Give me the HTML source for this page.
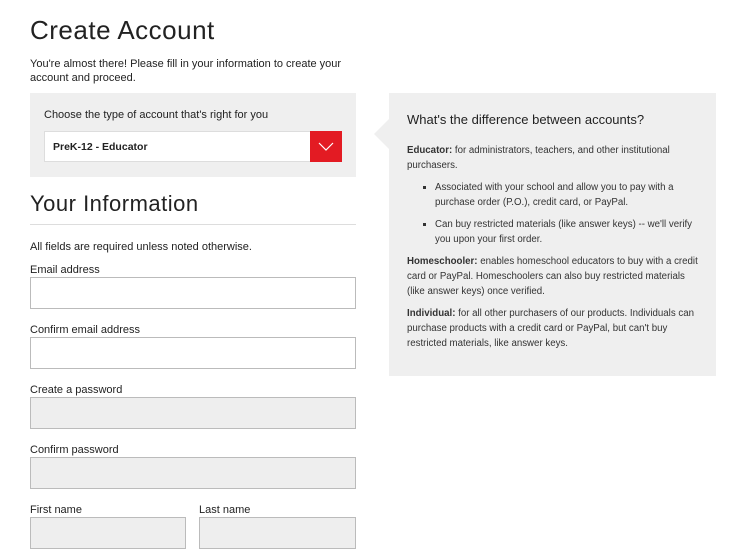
<!DOCTYPE html><html><head><style>
body{margin:0;width:750px;height:554px;background:#fff;font-family:"Liberation Sans",sans-serif;color:#222;position:relative;overflow:hidden}
.a{position:absolute}
h1{position:absolute;margin:0;font-weight:300;font-size:26px;letter-spacing:.5px;color:#222}
.lbl{position:absolute;font-size:11px;color:#222}
.in{position:absolute;box-sizing:border-box;border:1px solid #bbb;height:32px;background:#fff}
.in.g{background:#eee}
.rp p{margin:0 0 7px;font-size:9.7px;line-height:15px;color:#333}
.rp ul{margin:0 0 7px;padding-left:28px;list-style:square}
.rp li{font-size:9.7px;line-height:15px;color:#333;margin-bottom:7px}
</style></head><body>
<h1 style="left:30px;top:15px">Create Account</h1>
<div class="a" style="left:30px;top:57px;font-size:11px;line-height:14px;width:330px">You're almost there! Please fill in your information to create your account and proceed.</div>
<div class="a" style="left:30px;top:93px;width:326px;height:84px;background:#efefef"></div>
<div class="lbl" style="left:44px;top:109px">Choose the type of account that's right for you</div>
<div class="a" style="left:44px;top:131px;width:298px;height:31px;background:#fff;border:1px solid #ddd;box-sizing:border-box"></div>
<div class="a" style="left:53px;top:141px;font-size:10.5px;font-weight:bold;color:#222">PreK-12 - Educator</div>
<div class="a" style="left:310px;top:131px;width:32px;height:31px;background:#e31b23"><svg width="32" height="31"><path d="M9 12 L16 19 L23 12" fill="none" stroke="#fff" stroke-width="1.2"/></svg></div>
<h1 style="left:30px;top:191px;font-size:22px">Your Information</h1>
<div class="a" style="left:30px;top:224px;width:326px;height:1px;background:#ddd"></div>
<div class="lbl" style="left:30px;top:241px">All fields are required unless noted otherwise.</div>
<div class="lbl" style="left:30px;top:264px">Email address</div>
<div class="in" style="left:30px;top:277px;width:326px"></div>
<div class="lbl" style="left:30px;top:324px">Confirm email address</div>
<div class="in" style="left:30px;top:337px;width:326px"></div>
<div class="lbl" style="left:30px;top:384px">Create a password</div>
<div class="in g" style="left:30px;top:397px;width:326px"></div>
<div class="lbl" style="left:30px;top:444px">Confirm password</div>
<div class="in g" style="left:30px;top:457px;width:326px"></div>
<div class="lbl" style="left:30px;top:504px">First name</div>
<div class="in g" style="left:30px;top:517px;width:156px"></div>
<div class="lbl" style="left:199px;top:504px">Last name</div>
<div class="in g" style="left:199px;top:517px;width:157px"></div>
<div class="a" style="left:389px;top:93px;width:327px;height:283px;background:#efefef"></div>
<div class="a" style="left:374px;top:118px;width:0;height:0;border-top:16px solid transparent;border-bottom:16px solid transparent;border-right:16px solid #efefef"></div>
<div class="a rp" style="left:407px;top:112px;width:292px">
<div style="font-size:13px;color:#222;margin-bottom:16px">What's the difference between accounts?</div>
<p><b>Educator:</b> for administrators, teachers, and other institutional purchasers.</p>
<ul><li>Associated with your school and allow you to pay with a purchase order (P.O.), credit card, or PayPal.</li><li>Can buy restricted materials (like answer keys) -- we'll verify you upon your first order.</li></ul>
<p><b>Homeschooler:</b> enables homeschool educators to buy with a credit card or PayPal. Homeschoolers can also buy restricted materials (like answer keys) once verified.</p>
<p><b>Individual:</b> for all other purchasers of our products. Individuals can purchase products with a credit card or PayPal, but can't buy restricted materials, like answer keys.</p>
</div>
</body></html>
